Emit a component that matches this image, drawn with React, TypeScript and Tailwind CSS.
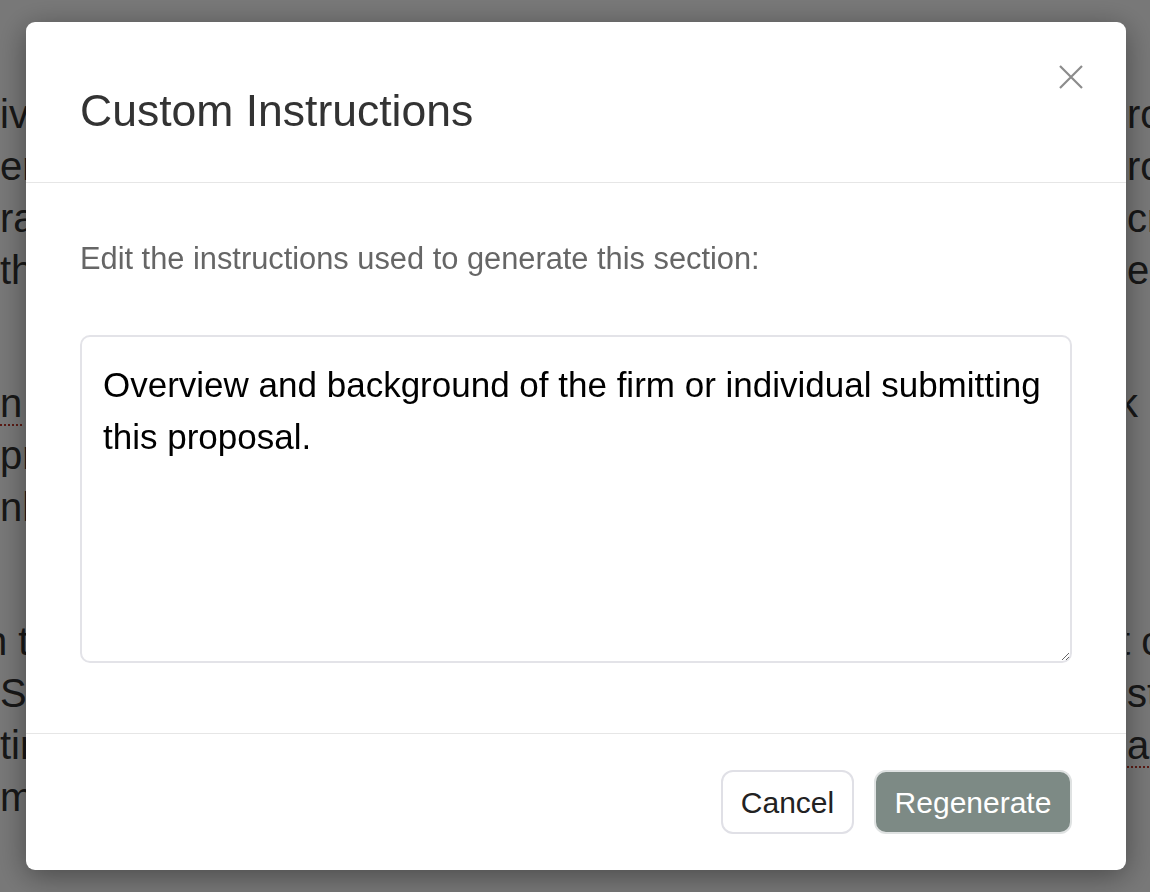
type Line = {
  left: string;
  right?: string;
  leftMark?: string;
  rightMark?: string;
  leftIndent?: string;
  rightIndent?: string;
};

// text of the page behind the dialog; only the edges show past the modal
const paragraphs: Line[][] = [
  [
    { left: "ive years our firm has delivered professional", right: "rojects" },
    { left: "ervices to public agencies and private clients", right: "roviding" },
    { left: "rafted solutions that meet each client's goals", right: "cross" },
    { left: "the highest standards of quality and integrity", right: "e the" },
  ],
  [
    { left: " which we bring to every engagement", leftMark: "n", right: "k consultants", rightIndent: "-indent-[9px]" },
    { left: "proven track record on similar engagements" },
    { left: "nhanced outcomes for the communities we serve" },
  ],
  [
    { left: "n the course of each engagement we work with", right: "t client", leftIndent: "-indent-[15px]", rightIndent: "-indent-[8px]" },
    { left: "Services are delivered by experienced staff", right: "standards" },
    { left: "timely reporting and transparent communication", rightMark: "ar" },
    { left: "management throughout the life of the project." },
  ],
];

const mark =
  "underline decoration-dotted decoration-[#c0392b] decoration-2 underline-offset-[7px]";

function PageLine({ line }: { line: Line }) {
  return (
    <div className="grid h-[52px] grid-cols-[1127px_1fr] whitespace-nowrap text-[40px] leading-[52px] text-[#333]">
      <div className={`overflow-hidden ${line.leftIndent ?? ""}`}>
        {line.leftMark && <span className={mark}>{line.leftMark}</span>}
        {line.left}
      </div>
      <div className={`overflow-hidden ${line.rightIndent ?? ""}`}>
        {line.right}
        {line.rightMark && <span className={mark}>{line.rightMark}</span>}
      </div>
    </div>
  );
}

function Page() {
  return (
    <div className="-mt-[48px]">
      <div className="mb-[84px] h-[52px] whitespace-nowrap pl-[252px] text-[40px] leading-[52px] text-[#333]">
        Meeting its Scope
      </div>
      {paragraphs.map((p, i) => (
        <div key={i} className={i === 0 ? "mb-[81px]" : "mb-[82px]"}>
          {p.map((line, j) => (
            <PageLine key={j} line={line} />
          ))}
        </div>
      ))}
    </div>
  );
}

function CloseIcon() {
  return (
    <svg width="24" height="24" viewBox="0 0 24 24" fill="none" stroke="currentColor" strokeWidth="2.2">
      <path d="M1 1L23 23M23 1L1 23" />
    </svg>
  );
}

function Modal() {
  return (
    <div className="relative ml-[26px] mt-[22px] w-[1100px] rounded-[9px] bg-white shadow-[0_6px_30px_rgba(0,0,0,0.4)]">
      <div className="h-[161px] border-b border-[#e6e6e6] px-[54px] pt-[63px]">
        <h2 className="text-[44.5px] leading-[52px] text-[#333]">Custom Instructions</h2>
      </div>
      <button className="absolute right-[43px] top-[43px] flex h-[24px] w-[24px] items-center justify-center text-[#8c8c8c]">
        <CloseIcon />
      </button>

      <div className="px-[54px] pb-[70px] pt-[56px]">
        <p className="text-[30.8px] leading-[40px] text-[#666]">
          Edit the instructions used to generate this section:
        </p>
        <textarea
          className="mt-[56px] block h-[328px] w-full rounded-[10px] border-2 border-[#e3e3e8] px-[21px] pt-[22px] text-[35px] leading-[52px] text-black outline-none"
          defaultValue="Overview and background of the firm or individual submitting this proposal."
        />
      </div>

      <div className="flex justify-end gap-[20px] border-t border-[#e6e6e6] px-[54px] py-[36px]">
        <button className="h-[64px] w-[133px] rounded-[12px] border-2 border-[#e0e0e6] bg-white text-[30px] text-[#222]">
          Cancel
        </button>
        <button className="h-[64px] w-[198px] rounded-[12px] border-2 border-[#dfe2e2] bg-[#7d8a85] text-[30px] text-white">
          Regenerate
        </button>
      </div>
    </div>
  );
}

export default function App() {
  return (
    <div className="relative h-[892px] overflow-hidden bg-white font-['Liberation_Sans',Arial,sans-serif]">
      <Page />
      <div className="fixed inset-0 bg-[rgba(0,0,0,0.53)]">
        <Modal />
      </div>
    </div>
  );
}
